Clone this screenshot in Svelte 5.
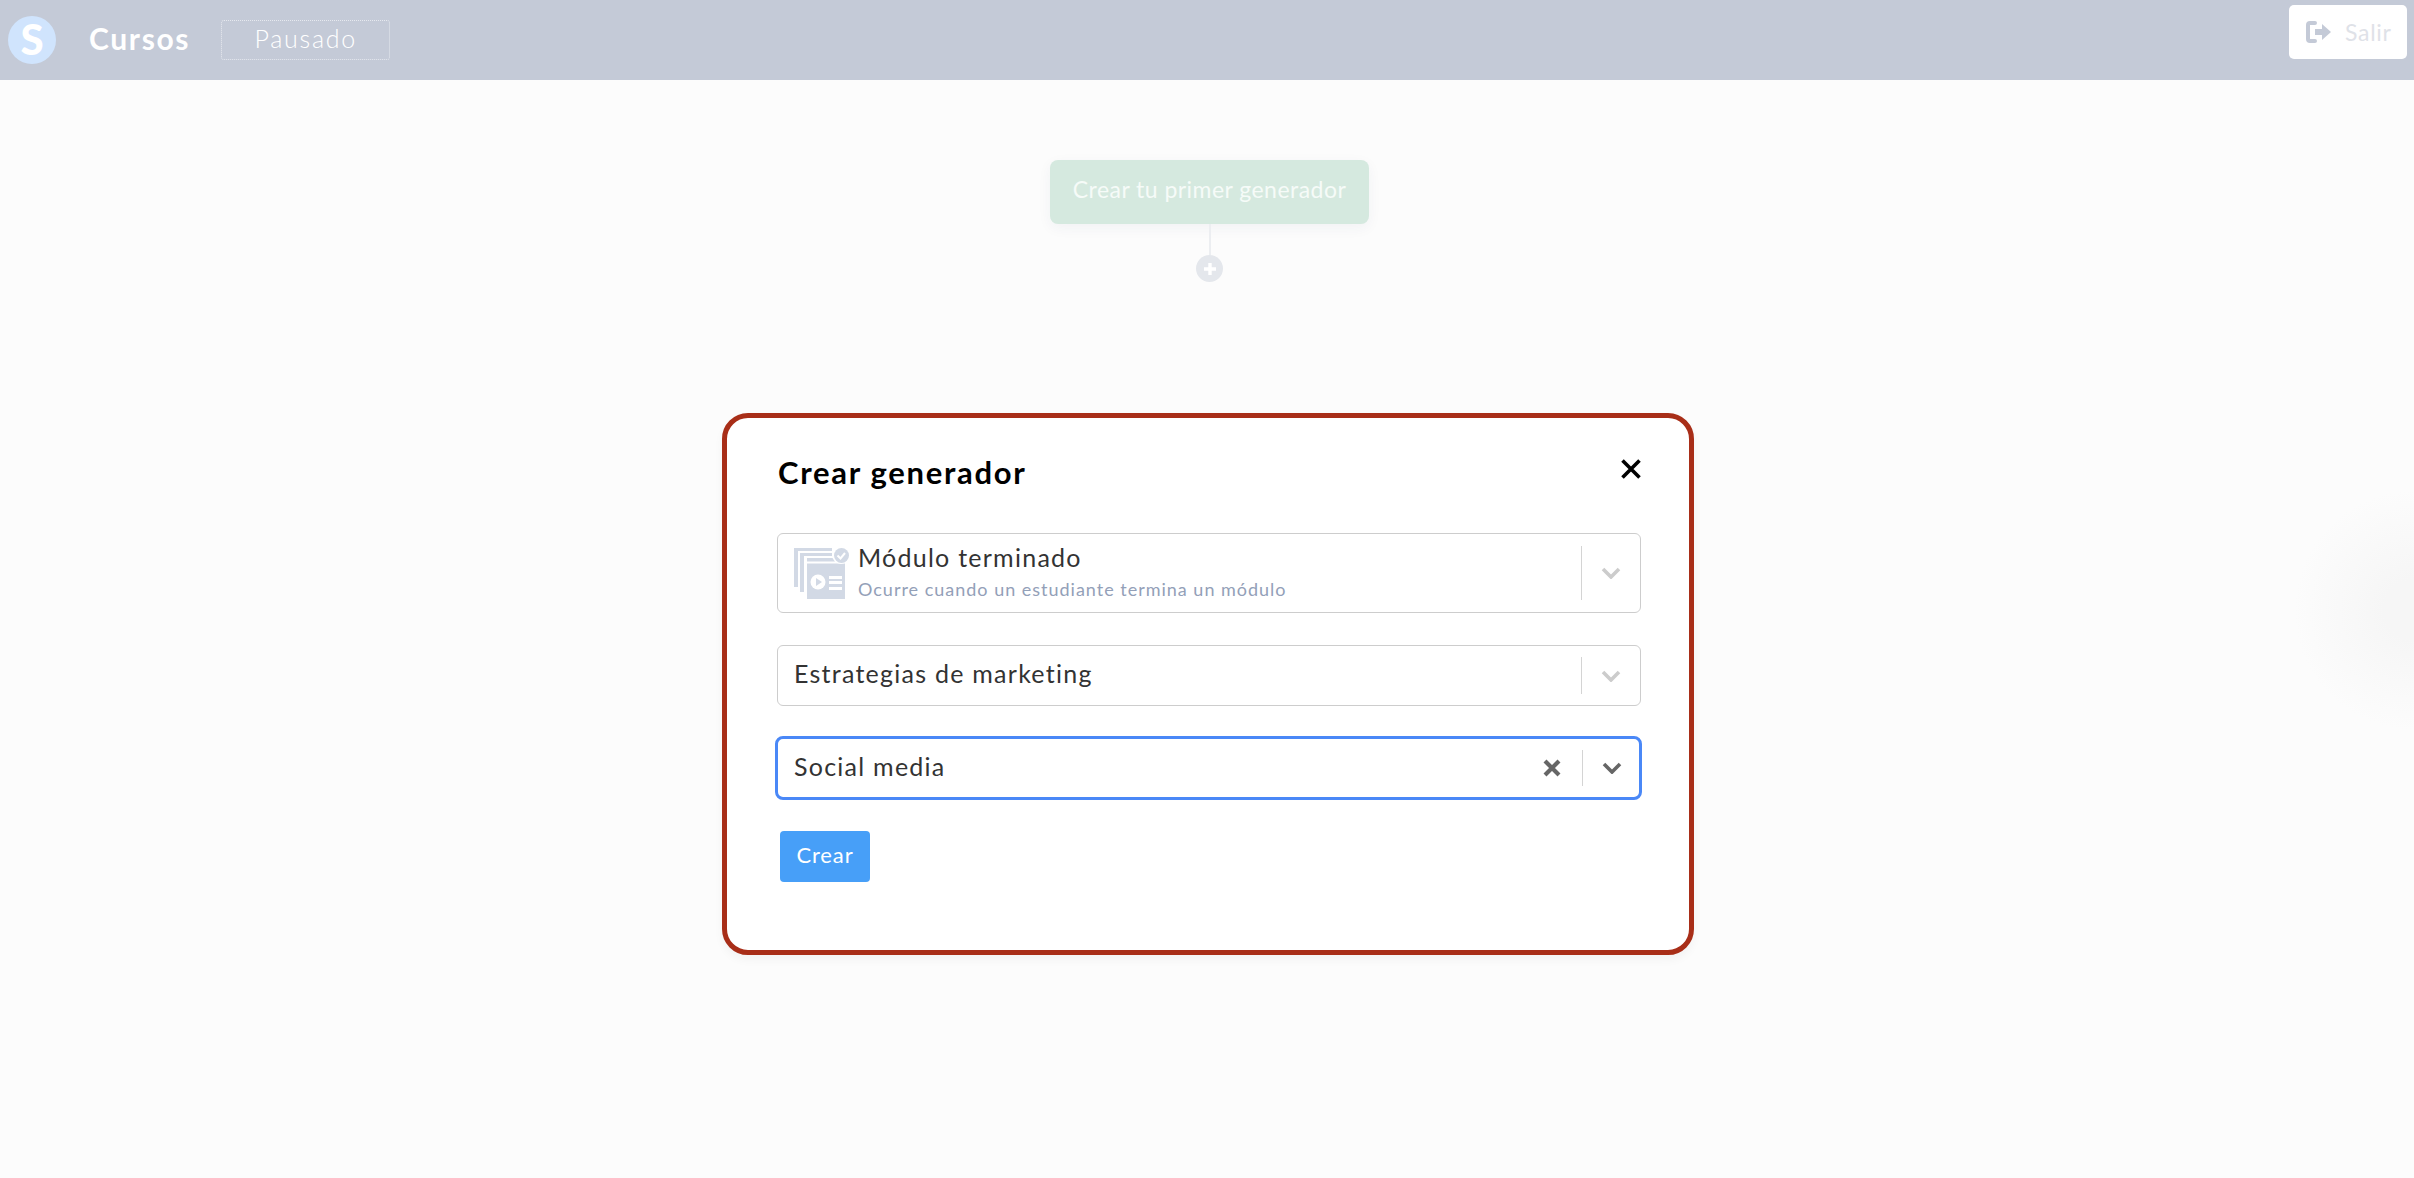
<script>
  const selects = [
    { label: "Estrategias de marketing" },
    { label: "Social media", focused: true }
  ];
</script>

<div class="page">
  <header class="top-bar">
    <div class="logo">S</div>
    <div class="title">Cursos</div>
    <div class="status">Pausado</div>
    <div class="exit">
      <svg width="26" height="24" viewBox="0 0 26 24">
        <path d="M9 3H4a2 2 0 0 0-2 2v14a2 2 0 0 0 2 2h5" fill="none" stroke="#c4cad7" stroke-width="4" stroke-linecap="round" />
        <path d="M9 9h7V4l9 8-9 8v-5H9z" fill="#c4cad7" />
      </svg>
      <span>Salir</span>
    </div>
  </header>

  <main class="canvas">
    <div class="first-node">Crear tu primer generador</div>
    <div class="connector"></div>
    <div class="add-node">
      <svg width="14" height="14" viewBox="0 0 14 14">
        <path d="M7 1v12M1 7h12" stroke="#fff" stroke-width="3.4" />
      </svg>
    </div>
  </main>

  <div class="side-glow"></div>

  <div class="overlay">
    <section class="modal">
      <div class="modal-head">
        <h2>Crear generador</h2>
        <svg class="close" width="22" height="22" viewBox="0 0 22 22">
          <path d="M2.5 2.5l17 17M19.5 2.5l-17 17" stroke="#000" stroke-width="3.6" />
        </svg>
      </div>

      <div class="select tall">
        <svg class="module-icon" width="57" height="54" viewBox="0 0 57 54">
          <path d="M0 2h38v3H4v36H0z" fill="#d2d9e5" />
          <path d="M6 7h32v3H10v36H6z" fill="#d2d9e5" />
          <path d="M13 12h38v41H13z" fill="#d2d9e5" />
          <path d="M13 15.500h38v2H13z" fill="#fff" />
          <circle cx="24" cy="36" r="7.500" fill="#fff" />
          <path d="M22 32l6 4-6 4z" fill="#d2d9e5" />
          <path d="M35 30h13v3H35zM35 35h13v3H35zM35 41h13v3H35z" fill="#fff" />
          <circle cx="47" cy="9" r="9" fill="#fff" />
          <circle cx="47.500" cy="9.500" r="7.500" fill="#d2d9e5" />
          <path d="M43.500 9.500l3 3 4.500-5.500" fill="none" stroke="#fff" stroke-width="2" />
        </svg>
        <div class="value-stack">
          <div class="value">Módulo terminado</div>
          <div class="hint">Ocurre cuando un estudiante termina un módulo</div>
        </div>
        <div class="divider"></div>
        <svg class="chevron" width="20" height="12" viewBox="0 0 20 12">
          <path d="M2 2l8 8 8-8" fill="none" stroke="#cccccc" stroke-width="3.600" />
        </svg>
      </div>

      {#each selects as s}
        <div class="select" class:focused={s.focused}>
          <div class="value plain">{s.label}</div>
          {#if s.focused}
            <svg class="clear" width="20" height="20" viewBox="0 0 20 20">
              <path d="M3 3l14 14M17 3L3 17" stroke="#666" stroke-width="4.200" />
            </svg>
          {/if}
          <div class="divider"></div>
          <svg class="chevron" width="20" height="12" viewBox="0 0 20 12">
            <path d="M2 2l8 8 8-8" fill="none" stroke={s.focused ? "#666" : "#cccccc"} stroke-width="3.600" />
          </svg>
        </div>
      {/each}

      <button class="create">Crear</button>
    </section>
  </div>
</div>

<style>
  :global(body) {
    margin: 0;
    font-family: "Lato", "Open Sans", sans-serif;
  }
  .page {
    position: relative;
    height: 1178px;
    overflow: hidden;
    background: #fcfcfc;
  }
  .top-bar {
    height: 80px;
    display: flex;
    align-items: center;
    padding: 0 7px 0 8px;
    background: #c4cad7;
    box-sizing: border-box;
    color: #fff;
  }
  .logo {
    width: 48px;
    height: 48px;
    border-radius: 50%;
    background: #d0e4fd;
    color: #fff;
    font-size: 42px;
    font-weight: 900;
    line-height: 46px;
    text-align: center;
  }
  .title {
    margin: -4px 0 0 33px;
    font-size: 30px;
    font-weight: 700;
    letter-spacing: 0.055em;
  }
  .status {
    margin-left: 31px;
    width: 169px;
    height: 40px;
    box-sizing: border-box;
    border: 1px dotted #e6e9ef;
    border-radius: 3px;
    font-size: 25px;
    font-weight: 300;
    letter-spacing: 0.07em;
    line-height: 34px;
    text-align: center;
  }
  .exit {
    margin-left: auto;
    width: 118px;
    height: 54px;
    margin-top: -16px;
    box-sizing: border-box;
    padding-left: 17px;
    display: flex;
    align-items: center;
    gap: 13px;
    background: #fff;
    border-radius: 5px;
    color: #dfe2e8;
    font-size: 23px;
    letter-spacing: 0.03em;
  }
  .canvas {
    display: flex;
    flex-direction: column;
    align-items: center;
    padding-top: 80px;
    padding-left: 5px;
  }
  .first-node {
    width: 319px;
    height: 64px;
    border-radius: 8px;
    background: #d5e9df;
    box-shadow: 0 4px 14px rgba(40, 60, 90, 0.05);
    color: #f6fbf8;
    font-size: 23px;
    letter-spacing: 0.02em;
    line-height: 58px;
    text-align: center;
  }
  .connector {
    width: 2px;
    height: 31px;
    background: #eceef1;
  }
  .add-node {
    width: 27px;
    height: 27px;
    border-radius: 50%;
    background: #e4e7ec;
    display: flex;
    align-items: center;
    justify-content: center;
  }
  .side-glow {
    position: absolute;
    right: -120px;
    top: 490px;
    width: 240px;
    height: 240px;
    border-radius: 50%;
    background: radial-gradient(closest-side, #f6f6f6 25%, rgba(252, 252, 252, 0));
  }
  .overlay {
    position: absolute;
    inset: 0;
    display: flex;
    justify-content: center;
    align-items: flex-start;
    padding-top: 413px;
    padding-left: 2px;
  }
  .modal {
    width: 972px;
    height: 542px;
    box-sizing: border-box;
    padding: 35px 48px 0 50px;
    border: 5px solid #a82e18;
    border-radius: 26px;
    background: #fff;
    box-shadow: 0 5px 10px rgba(0, 0, 0, 0.04);
    display: flex;
    flex-direction: column;
    align-items: stretch;
  }
  .modal-head {
    display: flex;
    justify-content: space-between;
    align-items: flex-start;
    height: 80px;
  }
  h2 {
    margin: -1px 0 0 1px;
    font-size: 31px;
    font-weight: 700;
    letter-spacing: 0.055em;
    line-height: 40px;
    color: #000;
  }
  .close {
    margin: 5px -1px 0 0;
  }
  .select {
    display: flex;
    align-items: center;
    height: 61px;
    margin: 0 0 30px 0;
    box-sizing: border-box;
    border: 1px solid #cdcdcd;
    border-radius: 6px;
    padding: 0 19px 0 16px;
    background: #fff;
  }
  .select.tall {
    height: 80px;
    margin-bottom: 32px;
  }
  .select.focused {
    height: 64px;
    margin: 0 -1px 31px -2px;
    border: 3px solid #4a88f7;
    border-radius: 8px;
    padding-left: 16px;
    padding-right: 17px;
  }
  .module-icon {
    flex: none;
    margin-right: 7px;
  }
  .value-stack {
    flex: 1;
    display: flex;
    flex-direction: column;
    gap: 6px;
    margin-top: -4px;
  }
  .value {
    font-size: 25px;
    letter-spacing: 0.05em;
    line-height: 30px;
    color: #333;
  }
  .value.plain {
    flex: 1;
    margin-top: -5px;
  }
  .hint {
    font-size: 18px;
    letter-spacing: 0.055em;
    line-height: 22px;
    color: #93a0b8;
  }
  .divider {
    width: 1px;
    align-self: stretch;
    margin: 11px 19px 11px 20px;
    background: #d4d4d4;
  }
  .tall .divider {
    margin-top: 12px;
    margin-bottom: 12px;
  }
  .chevron {
    flex: none;
  }
  .clear {
    flex: none;
  }
  .create {
    align-self: flex-start;
    margin-left: 3px;
    width: 90px;
    height: 51px;
    padding: 0 0 4px;
    border: none;
    border-radius: 4px;
    background: #479ff8;
    color: #fff;
    font-family: inherit;
    font-size: 22px;
    letter-spacing: 0.04em;
  }
</style>
